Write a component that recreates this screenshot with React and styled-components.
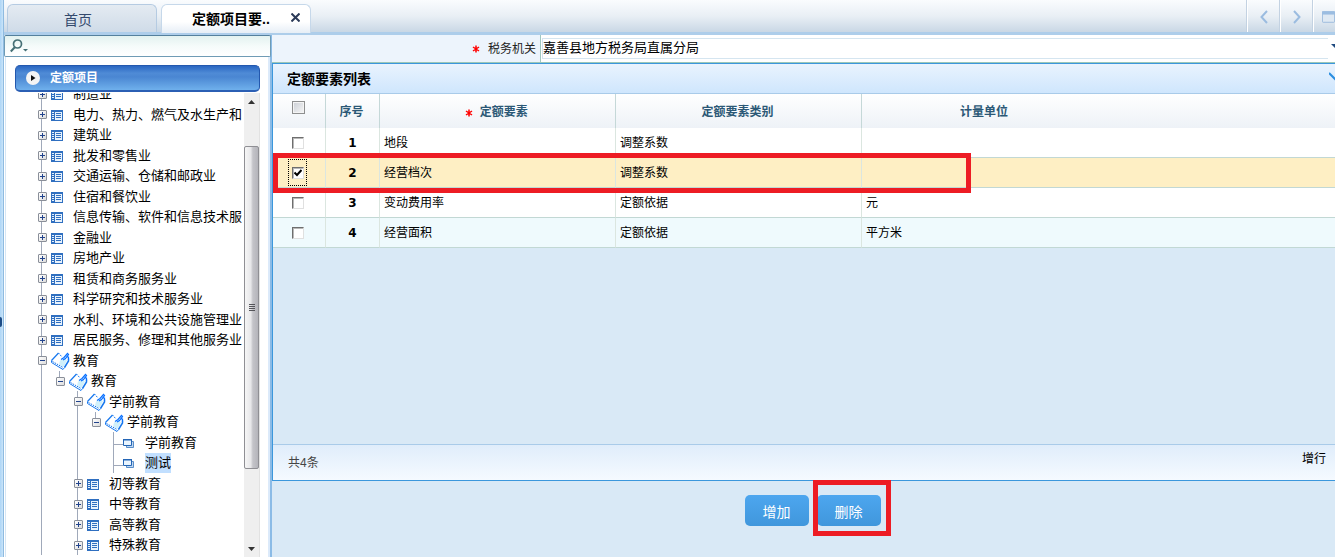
import React, { useState } from "react";
import styled, { createGlobalStyle, css } from "styled-components";

const GlobalStyle = createGlobalStyle`
  *, *::before, *::after { box-sizing: border-box; }
  body {
    margin: 0;
    overflow: hidden;
    background: #d9e9f6;
    color: #000;
    font-family: "Liberation Sans", "Noto Sans CJK SC", sans-serif;
    font-size: 12px;
    line-height: 20px;
  }
  button, input, select { font: inherit; color: inherit; margin: 0; }
`;

const Page = styled.div`
  height: 100vh;
  display: flex;
  overflow: hidden;
`;

const Rail = styled.div`
  flex: none;
  width: 4px;
  display: flex;
  align-items: center;
  background: linear-gradient(90deg, #add5f6, #c9e4f9);
  border-right: 1px solid #8fbbe0;
  overflow: hidden;
  padding-top: 86px;
`;

const RailKnob = styled.button`
  flex: none;
  width: 4px;
  height: 10px;
  margin-left: -2px;
  padding: 0;
  border: 0;
  border-radius: 5px;
  background: #1d4c86;
`;

const Shell = styled.div`
  flex: 1;
  min-width: 0;
  display: flex;
  flex-direction: column;
`;

const TabBar = styled.header`
  flex: none;
  height: 35px;
  display: flex;
  align-items: flex-end;
  gap: 4px;
  padding-left: 3px;
  background: linear-gradient(#fafcfe, #e9eff5 50%, #c9d7e5);
  border-bottom: 3px solid #adcdea;
`;

const Tab = styled.div`
  width: 150px;
  height: 28px;
  display: flex;
  align-items: center;
  border: 1px solid #b5cbe2;
  border-bottom: 0;
  border-radius: 6px 6px 0 0;
  background: linear-gradient(#e4ebf2, #cfdbe8);
  ${(p) =>
    p.$active &&
    css`
      height: 29px;
      margin-bottom: -1px;
      border-color: #c6d8ea;
      background: linear-gradient(#fff 60%, #e6eef6);
    `}
`;

const TabLabel = styled.button`
  flex: 1;
  padding: ${(p) => (p.$active ? "0 0 0 20px" : "2px 8px 0 0")};
  border: 0;
  background: none;
  color: ${(p) => (p.$active ? "#000" : "#33496d")};
  font-size: 14px;
  font-weight: ${(p) => (p.$active ? 700 : 400)};
  line-height: 20px;
  white-space: nowrap;
`;

const TabClose = styled.button`
  width: 30px;
  height: 20px;
  display: grid;
  place-items: center;
  padding: 0 0 4px;
  border: 0;
  background: none;
`;

const TabTools = styled.div`
  align-self: stretch;
  margin-left: auto;
  display: flex;
`;

const ToolButton = styled.button`
  width: ${(p) => (p.$last ? 22 : 33)}px;
  display: flex;
  align-items: center;
  justify-content: ${(p) => (p.$last ? "flex-start" : "center")};
  padding: ${(p) => (p.$last ? "2px 0 0 8px" : "2px 0 0")};
  border: 0;
  border-left: 1px solid #fff;
  box-shadow: -1px 0 #c3d2e2;
  background: none;
  overflow: hidden;
`;

const Body = styled.div`
  flex: 1;
  min-height: 0;
  display: flex;
`;

const Sidebar = styled.aside`
  flex: none;
  width: 268px;
  display: flex;
  flex-direction: column;
  background: #fff;
  border-right: 2px solid #8bbbe6;
`;

const SearchBox = styled.label`
  flex: none;
  height: 22px;
  display: flex;
  align-items: center;
  padding-left: 5px;
  border: 1px solid #6f9bb5;
  border-top-color: #54809d;
  border-radius: 2px;
  margin-right: -1px;
  background: linear-gradient(#e3f2f0, #f5fbfa 50%, #fff);
`;

const SearchInput = styled.input`
  flex: 1;
  min-width: 0;
  border: 0;
  outline: 0;
  background: none;
`;

const SideInner = styled.div`
  flex: 1;
  min-height: 0;
  display: flex;
  flex-direction: column;
  margin-left: 1px;
  padding: 8px 8px 0 9px;
  border-left: 1px solid #d5e6f5;
  border-right: 2px solid #dceafa;
`;

const SideTitle = styled.h2`
  flex: none;
  height: 27px;
  display: flex;
  align-items: center;
  gap: 10px;
  margin: 0 0 1px;
  padding-left: 10px;
  border: 1px solid #2358ae;
  border-bottom: 2px solid #2b5fb4;
  border-radius: 5px;
  background: linear-gradient(#2a67c2, #4f8bd6 30%, #4a86d2 45%, #6fb0ec);
  color: #fff;
  font-size: 12px;
  font-weight: 700;
`;

const TreeArea = styled.div`
  flex: 1;
  min-height: 0;
  display: flex;
`;

const TreeView = styled.div`
  flex: 1;
  min-width: 0;
  overflow: hidden;
`;

const TreeList = styled.ul`
  list-style: none;
  margin: -9px 0 0;
  padding: 0 0 0 18px;
`;

const TreeRow = styled.li`
  height: 20px;
  display: flex;
  align-items: center;
  white-space: nowrap;
  font-size: 13px;
  &:nth-child(even) { height: 21px; }
`;

const Guide = styled.span`
  flex: none;
  align-self: stretch;
  width: 18px;
  display: flex;
  align-items: center;
  padding-left: 5px;
  background-repeat: no-repeat;
  background-position: 8px 0, 8px 12px;
  ${(p) =>
    p.$kind !== "blank" &&
    css`
      background-image: linear-gradient(#a0a9ba, #a0a9ba)${p.$kind === "tee" && ", linear-gradient(#a0a9ba, #a0a9ba)"};
      background-size: 1px ${p.$kind === "end" ? "50%" : "100%"}, 10px 1px;
    `}
`;

const Toggle = styled.button`
  width: 9px;
  height: 9px;
  display: grid;
  place-items: center;
  padding: 0;
  border: 1px solid #8a8f99;
  border-radius: 1px;
  background: linear-gradient(135deg, #fff, #dcdcdc);
`;

const IconSlot = styled.span`
  flex: none;
  width: 22px;
  height: 20px;
  display: flex;
  align-items: center;
  padding-top: 1px;
`;

const NodeLabel = styled.span`
  line-height: 20px;
  background: ${(p) => (p.$selected ? "#c1dfff" : "transparent")};
`;

const ScrollTrack = styled.div`
  flex: none;
  width: 16px;
  display: flex;
  flex-direction: column;
  background: #efefef;
  border-right: 1px solid #e2e2e2;
`;

const ScrollButton = styled.button`
  flex: none;
  height: 17px;
  display: grid;
  place-items: center;
  padding: 0;
  border: 0;
  background: none;
`;

const ScrollSpace = styled.div`
  flex: ${(p) => p.$grow} 0 0;
`;

const ScrollThumb = styled.div`
  flex: 323 0 0;
  display: grid;
  place-items: center;
  border: 1px solid #8f8f94;
  border-radius: 2px;
  background: linear-gradient(90deg, #f6f6f6, #e7e7e9 45%, #c4c4c9 60%, #b4b4ba);
`;

const Main = styled.main`
  flex: 1;
  min-width: 0;
  display: flex;
  flex-direction: column;
`;

const FormRow = styled.div`
  flex: none;
  height: 28px;
  display: grid;
  grid-template-columns: 269px 1fr;
  border-bottom: 1px solid #9cc7b8;
`;

const FieldLabel = styled.label`
  display: flex;
  align-items: center;
  justify-content: flex-end;
  gap: 8px;
  padding-right: 4px;
  border-right: 1px solid #a2c8c0;
  background: #edf4fc;
  color: #222;
`;

const Star = styled.span`
  display: inline-flex;
  vertical-align: middle;
`;

const FieldCell = styled.div`
  display: flex;
  align-items: center;
  padding-left: 1px;
  background: #fff;
`;

const SelectBox = styled.select`
  flex: 1;
  min-width: 0;
  height: 21px;
  padding: 0 0 3px;
  appearance: none;
  border: 1px solid #d5e5f0;
  border-right: 0;
  border-radius: 0;
  background: #fff;
  font-size: 13px;
  line-height: 17px;
`;

const SelectArrow = styled.span`
  flex: none;
  width: 7px;
  display: flex;
  justify-content: flex-end;
  padding-bottom: 6px;
  overflow: hidden;
`;

const Panel = styled.section`
  flex: 1;
  min-height: 0;
  display: flex;
  flex-direction: column;
  border: 1px solid #3b97dc;
  border-right: 0;
`;

const PanelHead = styled.div`
  flex: none;
  height: 30px;
  display: flex;
  align-items: center;
  justify-content: space-between;
  padding-left: 14px;
  border-bottom: 1px solid #a9cbe9;
  background: linear-gradient(#e9f3fe, #cfe6fd);
`;

const PanelTitle = styled.h2`
  margin: 0;
  font-size: 14px;
  font-weight: 700;
  line-height: 20px;
`;

const Collapse = styled.button`
  width: 6px;
  height: 16px;
  padding: 0;
  border: 0;
  background: none;
  overflow: hidden;
  display: flex;
  justify-content: flex-start;
  & > svg { flex: none; }
`;

const GridArea = styled.div`
  flex: 1;
  min-height: 0;
  position: relative;
`;

const Table = styled.table`
  width: 100%;
  table-layout: fixed;
  border-collapse: separate;
  border-spacing: 0;
`;

const HeadCell = styled.th`
  height: 34px;
  padding: 2px 2px 0 0;
  border-right: ${(p) => (p.$open ? "0" : "1px solid #c5d8d8")};
  color: #2b5876;
  font-weight: 700;
  text-align: center;
  line-height: 20px;
`;

const HeadRow = styled.tr`
  background: linear-gradient(#fff, #eef2f7);
`;

const DataRow = styled.tr`
  background: ${(p) => (p.$selected ? "#feefc4" : p.$tint ? "#effafd" : "#fff")};
`;

const Cell = styled.td`
  height: 30px;
  padding: 0 4px;
  border-right: ${(p) => (p.$open ? "0" : "1px solid #dbe6e0")};
  border-bottom: 1px solid #c2d8d4;
  line-height: 20px;
  text-align: ${(p) => (p.$center ? "center" : "left")};
`;

const CheckCell = styled(Cell)`
  padding: 0 3px 0 0;
`;

const IndexCell = styled(Cell)`
  font-family: "DejaVu Sans", sans-serif;
  font-weight: 700;
`;

const CheckFrame = styled.span`
  display: grid;
  place-items: center;
  width: 19px;
  height: ${(p) => (p.$focus ? 27 : 13)}px;
  margin: ${(p) => (p.$raised ? "-10px" : "0")} auto 0;
  border: ${(p) => (p.$focus ? "1px dotted #000" : "0")};
  & > * { grid-area: 1 / 1; }
`;

const Tick = styled.svg`
  pointer-events: none;
`;

const CheckInput = styled.input`
  appearance: none;
  width: 12px;
  height: 12px;
  border: 1px solid #e0e0e0;
  border-top: 1px solid #6e6e6e;
  border-left: 1px solid #6e6e6e;
  background: #fff;
  box-shadow: inset 1px 1px #b8b8b8;
  ${(p) =>
    p.$raised &&
    css`
      width: 13px;
      height: 13px;
      border: 1px solid #8e8f8f;
      box-shadow: inset 0 0 0 1px #f4f4f4;
      background: linear-gradient(135deg, #cbcfd5, #f6f6f6);
    `}
`;

const PanelFoot = styled.div`
  flex: none;
  height: 36px;
  display: flex;
  justify-content: space-between;
  padding: 0 9px 0 15px;
  border-top: 1px solid #a9cbe9;
  background: linear-gradient(#e0edfb, #f5faff);
`;

const Count = styled.span`
  padding-top: 8px;
  color: #444;
`;

const AddRow = styled.button`
  align-self: flex-start;
  padding: 4px 0 0;
  border: 0;
  background: none;
`;

const Actions = styled.div`
  flex: none;
  height: 76px;
  display: flex;
  justify-content: center;
  gap: 8px;
  padding: 14px 0 0 18px;
`;

const ActionWrap = styled.div`
  position: relative;
  height: 31px;
`;

const ActionButton = styled.button`
  width: 64px;
  height: 31px;
  padding: 3px 0 0;
  border: 0;
  border-radius: 5px;
  background: linear-gradient(#4da6ef, #4097dc);
  color: #fff;
  font-size: 14px;
  line-height: 20px;
`;

const RowMarker = styled.div`
  position: absolute;
  top: 59px;
  left: 0;
  width: 698px;
  height: 40px;
  border: 5px solid #ed1c24;
  pointer-events: none;
`;

const ButtonMarker = styled.div`
  position: absolute;
  inset: -15px -10px -10px -4px;
  border: 5px solid #ed1c24;
  pointer-events: none;
`;

const RequiredStar = () => (
  <Star aria-label="必填">
    <svg width="8" height="8" viewBox="0 0 8 8" stroke="#f00" strokeWidth="1.5">
      <path d="M4 0.5v7M1 2l6 4M7 2L1 6" />
    </svg>
  </Star>
);

const ListIcon = () => (
  <svg width="12" height="11" viewBox="0 0 12 11" shapeRendering="crispEdges">
    <path fill="#2f6fc0" d="M0 0h12v11H0z" />
    <path fill="#e8f2fc" d="M1 2h2v1H1zM1 4h2v1H1zM1 6h2v1H1zM1 8h2v1H1zM4 2h7v8H4z" />
    <path fill="#2f6fc0" d="M5 3h5v1H5zM5 5h5v1H5zM5 7h5v1H5z" />
  </svg>
);

const BookIcon = () => (
  <svg width="19" height="18" viewBox="0 0 19 18" fill="none">
    <path d="M1 8.500L8 1.500l2.500 3L13 15z" fill="#fff" />
    <path d="M9 8.500l5-2 2 2-3.500 6.500L8 12.500z" fill="#d0f0fb" />
    <path d="M.5 8.500L7.500 1" stroke="#1677ee" strokeWidth="1.200" />
    <path d="M7.500 1l3.500 4M1.500 9.500L12 15.500" stroke="#1677ee" strokeDasharray="1.500 1" />
    <path d="M.5 8.500v2L12 17.500l1.500-2" stroke="#1677ee" />
    <path d="M13.500 15.500L17.500 9V6.500" stroke="#1677ee" strokeWidth="1.500" />
    <path d="M10 7.500l3-2 3.500-4 1 1-3 4-2.500 1.500M15 5h2.500v2.500" stroke="#0870ff" strokeWidth="1.200" />
  </svg>
);

const LeafIcon = () => (
  <svg width="12" height="11" viewBox="0 0 12 11">
    <path d="M3.500 3.500h7v6h-7z" fill="#bfd7f1" stroke="#5b8fc9" />
    <path d="M.5 1.500h8v6h-8z" fill="#eaf5ff" stroke="#2465b5" />
    <path d="M0 1h9v1.500H0z" fill="#2465b5" />
  </svg>
);

const icons = { list: ListIcon, book: BookIcon, leaf: LeafIcon };

const top = (name) => ({ name, icon: "list", guides: ["plus"] });
const sub = (name) => ({ name, icon: "list", guides: ["line", "blank", "plus"] });

const nodes = [
  top("制造业"),
  top("电力、热力、燃气及水生产和"),
  top("建筑业"),
  top("批发和零售业"),
  top("交通运输、仓储和邮政业"),
  top("住宿和餐饮业"),
  top("信息传输、软件和信息技术服"),
  top("金融业"),
  top("房地产业"),
  top("租赁和商务服务业"),
  top("科学研究和技术服务业"),
  top("水利、环境和公共设施管理业"),
  top("居民服务、修理和其他服务业"),
  { name: "教育", icon: "book", guides: ["minus"] },
  { name: "教育", icon: "book", guides: ["line", "end"] },
  { name: "学前教育", icon: "book", guides: ["line", "blank", "minus"] },
  { name: "学前教育", icon: "book", guides: ["line", "blank", "line", "end"] },
  { name: "学前教育", icon: "leaf", guides: ["line", "blank", "line", "blank", "tee"] },
  { name: "测试", icon: "leaf", guides: ["line", "blank", "line", "blank", "tee"], selected: true },
  sub("初等教育"),
  sub("中等教育"),
  sub("高等教育"),
  sub("特殊教育"),
];

const rows = [
  { id: 1, name: "地段", type: "调整系数", unit: "" },
  { id: 2, name: "经营档次", type: "调整系数", unit: "" },
  { id: 3, name: "变动费用率", type: "定额依据", unit: "元" },
  { id: 4, name: "经营面积", type: "定额依据", unit: "平方米" },
];

const hasToggle = (kind) => ["plus", "minus", "end"].includes(kind);

function TreeNode({ node }) {
  const Icon = icons[node.icon];
  return (
    <TreeRow>
      {node.guides.map((kind, i) => (
        <Guide key={i} $kind={kind}>
          {hasToggle(kind) && (
            <Toggle aria-label={kind === "plus" ? "展开" : "收起"}>
              <svg width="7" height="7" viewBox="0 0 7 7" shapeRendering="crispEdges" fill="#21438c">
                <path d={kind === "plus" ? "M1 3h5v1H1zM3 1h1v5H3z" : "M1 3h5v1H1z"} />
              </svg>
            </Toggle>
          )}
        </Guide>
      ))}
      <IconSlot>
        <Icon />
      </IconSlot>
      <NodeLabel $selected={node.selected}>{node.name}</NodeLabel>
    </TreeRow>
  );
}

function Check({ label, checked, onChange, raised }) {
  return (
    <CheckFrame $focus={checked} $raised={raised}>
      <CheckInput type="checkbox" aria-label={label} checked={checked} onChange={onChange} $raised={raised} />
      {checked && (
        <Tick width="8" height="8" viewBox="0 0 8 8">
          <path d="M.5 3.500L3 6l4.500-5" fill="none" stroke="#000" strokeWidth="2" />
        </Tick>
      )}
    </CheckFrame>
  );
}

export default function App() {
  const [selected, setSelected] = useState([2]);
  const flip = (id) => setSelected((s) => (s.includes(id) ? s.filter((x) => x !== id) : [...s, id]));
  const all = selected.length === rows.length;

  return (
    <>
      <GlobalStyle />
      <Page>
        <Rail>
          <RailKnob aria-label="收起侧栏" />
        </Rail>
        <Shell>
          <TabBar>
            <Tab>
              <TabLabel>首页</TabLabel>
            </Tab>
            <Tab $active>
              <TabLabel $active>定额项目要..</TabLabel>
              <TabClose aria-label="关闭">
                <svg width="9" height="9" viewBox="0 0 9 9" stroke="#2b3a58" strokeWidth="2">
                  <path d="M.5.5l8 8M8.500.5l-8 8" />
                </svg>
              </TabClose>
            </Tab>
            <TabTools>
              <ToolButton aria-label="向左">
                <svg width="8" height="14" viewBox="0 0 8 14" fill="none" stroke="#9bbce0" strokeWidth="2">
                  <path d="M7 1L1.500 7 7 13" />
                </svg>
              </ToolButton>
              <ToolButton aria-label="向右">
                <svg width="8" height="14" viewBox="0 0 8 14" fill="none" stroke="#9bbce0" strokeWidth="2">
                  <path d="M1 1l5.500 6L1 13" />
                </svg>
              </ToolButton>
              <ToolButton $last aria-label="窗口">
                <svg width="16" height="14" viewBox="0 0 16 14">
                  <rect x=".5" y=".5" width="15" height="13" rx="1" fill="#dfe9f3" stroke="#8fb3d9" />
                  <path d="M0 0h16v4H0z" fill="#9bbde1" />
                </svg>
              </ToolButton>
            </TabTools>
          </TabBar>
          <Body>
            <Sidebar>
              <SearchBox>
                <svg width="20" height="14" viewBox="0 0 20 14" fill="none">
                  <circle cx="7.500" cy="5" r="4" stroke="#456f75" strokeWidth="1.700" />
                  <path d="M5 8L.8 12.500" stroke="#456f75" strokeWidth="2" />
                  <path d="M13 10h5l-2.500 2.500z" fill="#456f75" />
                </svg>
                <SearchInput type="text" aria-label="搜索" />
              </SearchBox>
              <SideInner>
                <SideTitle>
                  <svg width="14" height="14" viewBox="0 0 14 14">
                    <circle cx="7" cy="7" r="7" fill="#f4f4f4" />
                    <path d="M5 4l4.500 3L5 10z" fill="#111" />
                  </svg>
                  定额项目
                </SideTitle>
                <TreeArea>
                  <TreeView>
                    <TreeList>
                      {nodes.map((node, i) => (
                        <TreeNode key={i} node={node} />
                      ))}
                    </TreeList>
                  </TreeView>
                  <ScrollTrack>
                    <ScrollButton aria-label="向上滚动">
                      <svg width="7" height="4" viewBox="0 0 7 4" fill="#333">
                        <path d="M0 4l3.500-4L7 4z" />
                      </svg>
                    </ScrollButton>
                    <ScrollSpace $grow={36} />
                    <ScrollThumb>
                      <svg width="8" height="8" viewBox="0 0 8 8" fill="#55555a" shapeRendering="crispEdges">
                        <path d="M1 0h6v1H1zM1 2h6v1H1zM1 4h6v1H1zM1 6h6v1H1z" />
                      </svg>
                    </ScrollThumb>
                    <ScrollSpace $grow={71} />
                    <ScrollButton aria-label="向下滚动">
                      <svg width="7" height="4" viewBox="0 0 7 4" fill="#333">
                        <path d="M0 0l3.500 4L7 0z" />
                      </svg>
                    </ScrollButton>
                  </ScrollTrack>
                </TreeArea>
              </SideInner>
            </Sidebar>
            <Main>
              <FormRow>
                <FieldLabel htmlFor="office">
                  <RequiredStar />
                  税务机关
                </FieldLabel>
                <FieldCell>
                  <SelectBox id="office">
                    <option>嘉善县地方税务局直属分局</option>
                  </SelectBox>
                  <SelectArrow>
                    <svg width="4" height="4" viewBox="0 0 4 4" fill="#1f4a80">
                      <path d="M0 0h4v4z" />
                    </svg>
                  </SelectArrow>
                </FieldCell>
              </FormRow>
              <Panel>
                <PanelHead>
                  <PanelTitle>定额要素列表</PanelTitle>
                  <Collapse aria-label="折叠">
                    <svg width="14" height="12" viewBox="0 0 14 12" fill="none" stroke="#2c8fe0" strokeWidth="2">
                      <path d="M0 2l6 6 6-6" />
                    </svg>
                  </Collapse>
                </PanelHead>
                <GridArea>
                  <Table>
                    <colgroup>
                      <col width="53" />
                      <col width="54" />
                      <col width="236" />
                      <col width="246" />
                      <col width="246" />
                      <col />
                    </colgroup>
                    <thead>
                      <HeadRow>
                        <HeadCell>
                          <Check
                            raised
                            label="全选"
                            checked={all}
                            onChange={() => setSelected(all ? [] : rows.map((r) => r.id))}
                          />
                        </HeadCell>
                        <HeadCell>序号</HeadCell>
                        <HeadCell>
                          <RequiredStar />
                          &nbsp; 定额要素
                        </HeadCell>
                        <HeadCell>定额要素类别</HeadCell>
                        <HeadCell $open>计量单位</HeadCell>
                        <HeadCell $open as="td" />
                      </HeadRow>
                    </thead>
                    <tbody>
                      {rows.map((row) => (
                        <DataRow key={row.id} $selected={selected.includes(row.id)} $tint={row.id % 2 === 0}>
                          <CheckCell $center>
                            <Check
                              label={`选择${row.name}`}
                              checked={selected.includes(row.id)}
                              onChange={() => flip(row.id)}
                            />
                          </CheckCell>
                          <IndexCell $center>{row.id}</IndexCell>
                          <Cell>{row.name}</Cell>
                          <Cell>{row.type}</Cell>
                          <Cell $open>{row.unit}</Cell>
                          <Cell $open />
                        </DataRow>
                      ))}
                    </tbody>
                  </Table>
                  <RowMarker />
                </GridArea>
                <PanelFoot>
                  <Count>共4条</Count>
                  <AddRow>增行</AddRow>
                </PanelFoot>
              </Panel>
              <Actions>
                <ActionWrap>
                  <ActionButton>增加</ActionButton>
                </ActionWrap>
                <ActionWrap>
                  <ActionButton>删除</ActionButton>
                  <ButtonMarker />
                </ActionWrap>
              </Actions>
            </Main>
          </Body>
        </Shell>
      </Page>
    </>
  );
}
